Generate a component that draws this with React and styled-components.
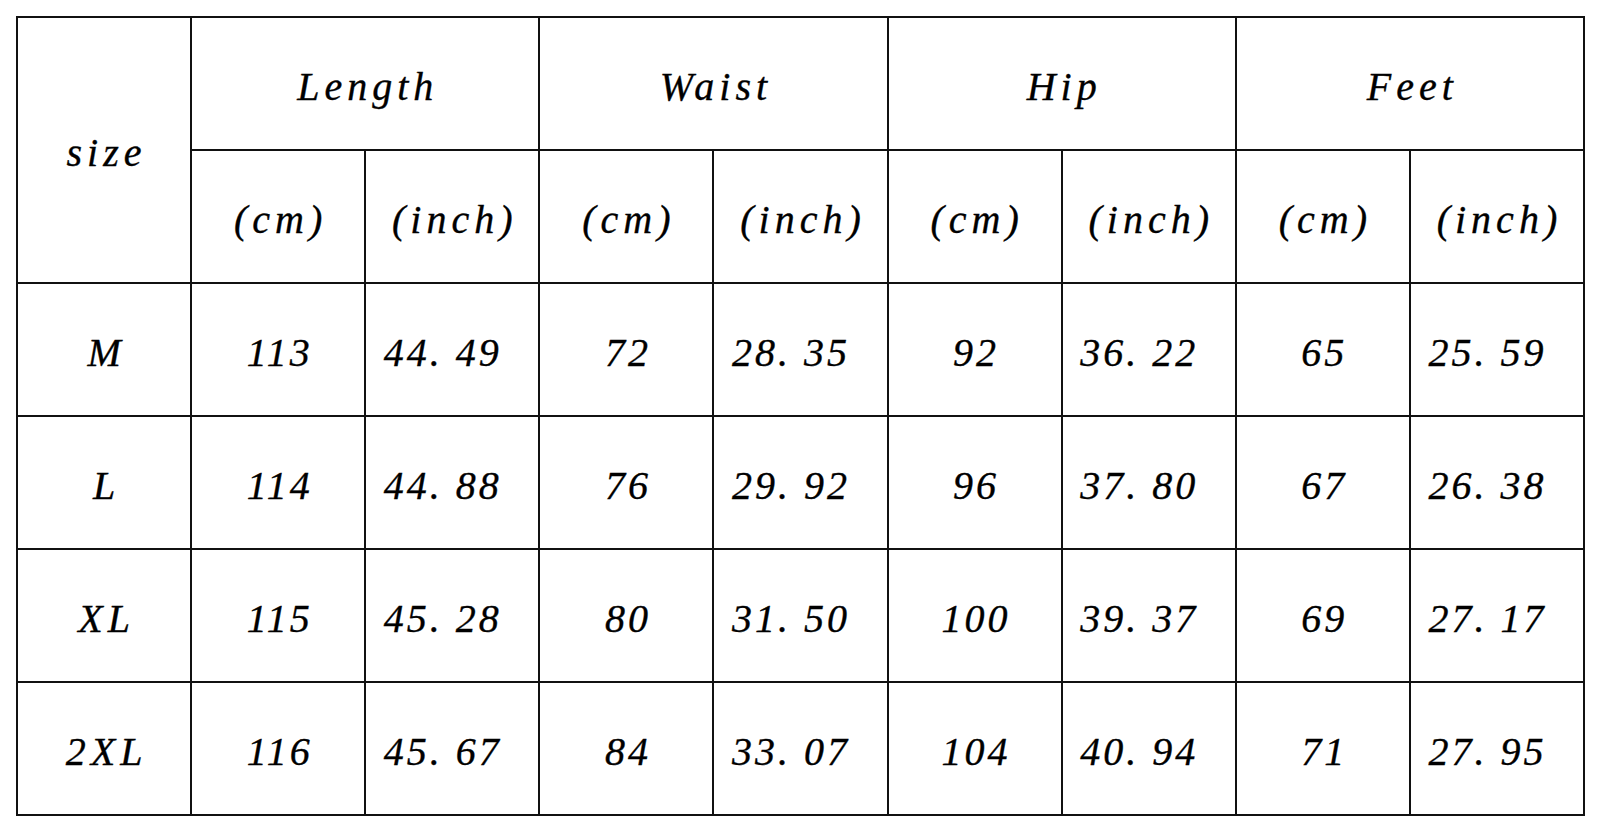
import React from "react";
import styled, { createGlobalStyle } from "styled-components";

const GlobalStyle = createGlobalStyle`
  html, body {
    margin: 0;
    padding: 0;
    background: #ffffff;
  }
  body {
    width: 1600px;
    height: 833px;
    overflow: hidden;
  }
`;

const Page = styled.div`
  padding: 16px 0 0 16px;
`;

const SizeTable = styled.table`
  border-collapse: collapse;
  table-layout: fixed;
  width: 1567px;
`;

const Cell = styled.td`
  border: 2px solid #111111;
  height: 125px;
  padding: 6px ${(p) => (p.$inch ? "22px" : "0")} 0
    ${(p) => (p.$num ? "3px" : "5px")};
  text-align: center;
  vertical-align: middle;
  font-family: "Liberation Serif", "Times New Roman", serif;
  font-style: italic;
  font-size: 40px;
  color: #000000;
  -webkit-text-stroke: 0.35px #000000;
  letter-spacing: ${(p) => (p.$num ? "3px" : "5px")};
  white-space: nowrap;
  line-height: 1.1;
`;

const columns = ["Length", "Waist", "Hip", "Feet"];

const rows = [
  ["M", "113", "44. 49", "72", "28. 35", "92", "36. 22", "65", "25. 59"],
  ["L", "114", "44. 88", "76", "29. 92", "96", "37. 80", "67", "26. 38"],
  ["XL", "115", "45. 28", "80", "31. 50", "100", "39. 37", "69", "27. 17"],
  ["2XL", "116", "45. 67", "84", "33. 07", "104", "40. 94", "71", "27. 95"],
];

export default function App() {
  return (
    <Page>
      <GlobalStyle />
      <SizeTable>
        <colgroup>
          {Array.from({ length: 9 }).map((_, i) => (
            <col key={i} style={{ width: `${1567 / 9}px` }} />
          ))}
        </colgroup>
        <tbody>
          <tr>
            <Cell rowSpan={2}>size</Cell>
            {columns.map((c) => (
              <Cell key={c} colSpan={2}>
                {c}
              </Cell>
            ))}
          </tr>
          <tr>
            {columns.map((c) => (
              <React.Fragment key={c}>
                <Cell>(cm)</Cell>
                <Cell>(inch)</Cell>
              </React.Fragment>
            ))}
          </tr>
          {rows.map((r) => (
            <tr key={r[0]}>
              {r.map((v, i) => (
                <Cell key={i} $num={i > 0} $inch={i > 0 && i % 2 === 0}>
                  {v}
                </Cell>
              ))}
            </tr>
          ))}
        </tbody>
      </SizeTable>
    </Page>
  );
}
